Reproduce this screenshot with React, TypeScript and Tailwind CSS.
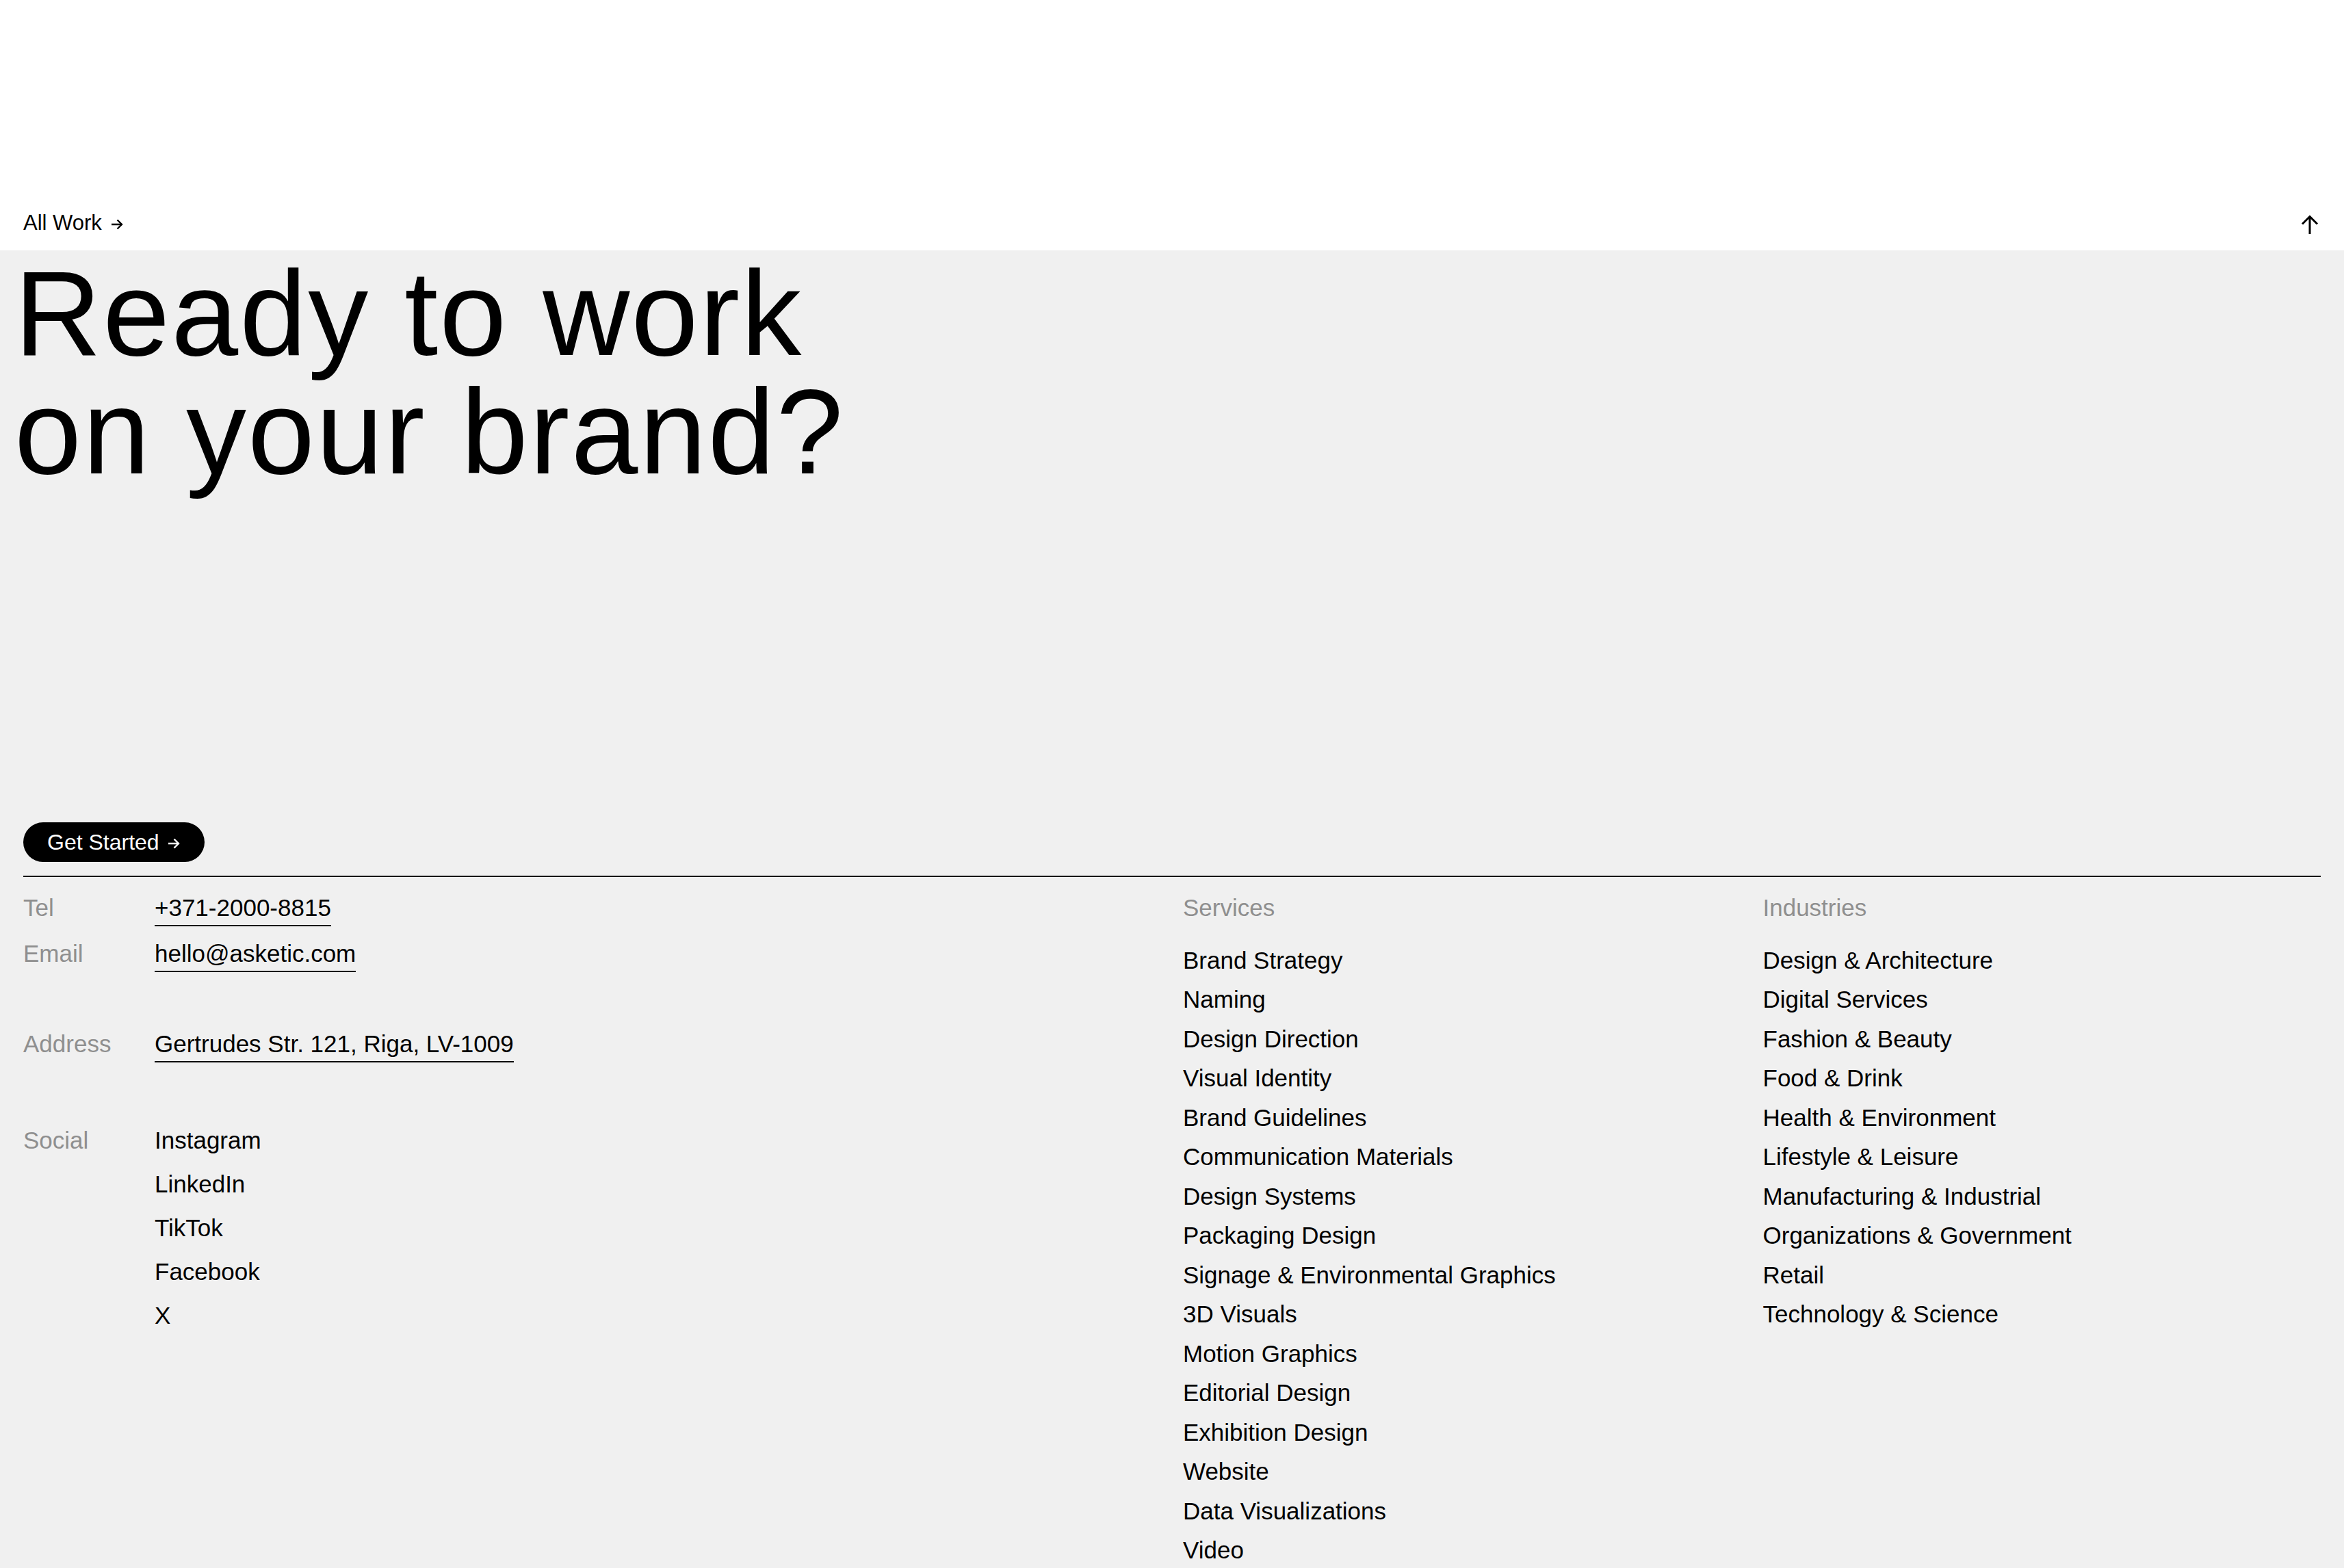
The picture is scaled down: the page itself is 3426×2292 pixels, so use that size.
const services = [
  "Brand Strategy",
  "Naming",
  "Design Direction",
  "Visual Identity",
  "Brand Guidelines",
  "Communication Materials",
  "Design Systems",
  "Packaging Design",
  "Signage & Environmental Graphics",
  "3D Visuals",
  "Motion Graphics",
  "Editorial Design",
  "Exhibition Design",
  "Website",
  "Data Visualizations",
  "Video",
];

const industries = [
  "Design & Architecture",
  "Digital Services",
  "Fashion & Beauty",
  "Food & Drink",
  "Health & Environment",
  "Lifestyle & Leisure",
  "Manufacturing & Industrial",
  "Organizations & Government",
  "Retail",
  "Technology & Science",
];

const socials = ["Instagram", "LinkedIn", "TikTok", "Facebook", "X"];

function ArrowRight({ className }: { className?: string }) {
  return (
    <svg viewBox="0 0 18 18" className={className} fill="none" stroke="currentColor" strokeWidth="2.4">
      <path d="M1 9h15M9.5 2.5 16 9l-6.5 6.5" />
    </svg>
  );
}

function ArrowUp() {
  return (
    <svg viewBox="0 0 26 28" className="w-[26px] h-[28px]" fill="none" stroke="currentColor" strokeWidth="3">
      <path d="M13 28V3M2 13.5 13 2.5l11 11" />
    </svg>
  );
}

function ContactRow({ label, value, className }: { label: string; value: string; className?: string }) {
  return (
    <div className={`flex text-[35px] leading-[40px] ${className ?? ""}`}>
      <span className="w-[192px] shrink-0 text-[#8f8f8f]">{label}</span>
      <a href="#" className="inline-block border-b-2 border-black pb-[5px]">
        {value}
      </a>
    </div>
  );
}

function ListColumn({ title, items }: { title: string; items: string[] }) {
  return (
    <div className="flex flex-col text-[35px]">
      <span className="leading-[40px] text-[#8f8f8f]">{title}</span>
      <ul className="mt-[27.5px] flex flex-col">
        {items.map((item) => (
          <li key={item} className="leading-[57.5px]">
            <a href="#">{item}</a>
          </li>
        ))}
      </ul>
    </div>
  );
}

export default function App() {
  return (
    <div
      className="h-[2292px] overflow-hidden bg-[#f0f0f0] text-black"
      style={{ fontFamily: '"Liberation Sans", Arial, sans-serif' }}
    >
      <header className="h-[366px] bg-white flex items-end justify-between px-[34px] pb-[20px]">
        <a href="#" className="flex items-center gap-[13px] text-[31px] leading-[40px]">
          All Work
          <ArrowRight className="w-[18px] h-[18px] mt-[4px]" />
        </a>
        <a href="#" className="mb-[4px] mr-[3px]">
          <ArrowUp />
        </a>
      </header>

      <section className="px-[34px]">
        <h1 className="ml-[-13px] pt-[6px] text-[176px] leading-[173px] font-normal tracking-[0.012em]">
          Ready to work
          <br />
          on your brand?
        </h1>

        <a
          href="#"
          className="mt-[484px] inline-flex h-[58px] items-center gap-[12px] rounded-full bg-black pl-[35px] pr-[36px] text-[32px] text-white"
        >
          Get Started
          <ArrowRight className="w-[18px] h-[18px] mt-[3px]" />
        </a>

        <div className="mt-[20px] h-[2px] bg-black" />

        <div className="grid grid-cols-4 gap-x-[32px] pt-[25px]">
          <div className="col-span-2 flex flex-col">
            <ContactRow label="Tel" value="+371-2000-8815" />
            <ContactRow label="Email" value="hello@asketic.com" className="mt-[20px]" />
            <ContactRow label="Address" value="Gertrudes Str. 121, Riga, LV-1009" className="mt-[85px]" />
            <div className="mt-[82px] flex text-[35px] leading-[64px]">
              <span className="w-[192px] shrink-0 text-[#8f8f8f]">Social</span>
              <ul className="flex flex-col">
                {socials.map((s) => (
                  <li key={s}>
                    <a href="#">{s}</a>
                  </li>
                ))}
              </ul>
            </div>
          </div>
          <ListColumn title="Services" items={services} />
          <ListColumn title="Industries" items={industries} />
        </div>
      </section>
    </div>
  );
}
